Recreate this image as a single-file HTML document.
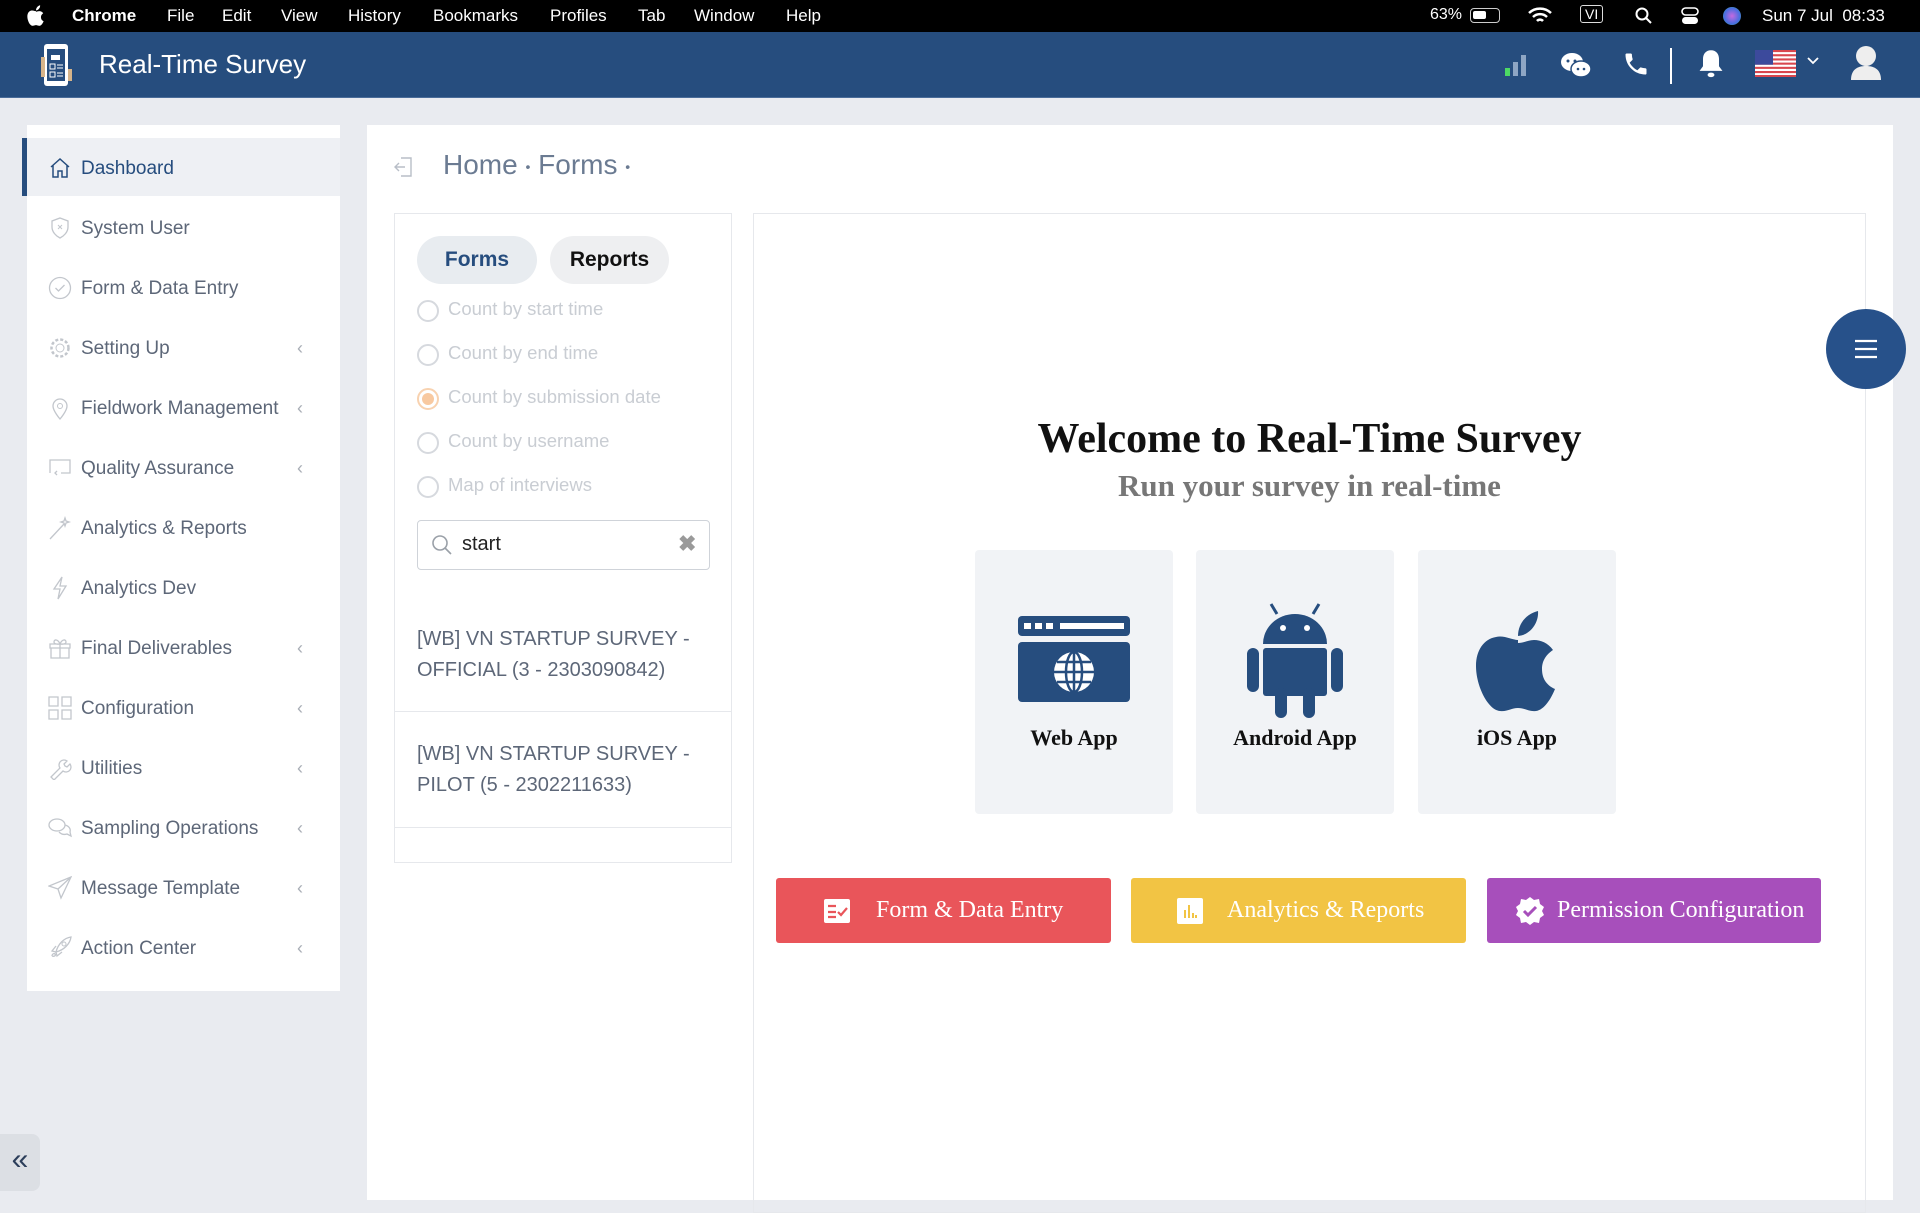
<!DOCTYPE html>
<html><head><meta charset="utf-8"><style>
*{box-sizing:border-box;margin:0;padding:0}
body{width:1920px;height:1200px;overflow:hidden;background:#e9ebf0;font-family:"Liberation Sans",sans-serif;position:relative}
.abs{position:absolute}
.mb{left:0;top:0;width:1920px;height:32px;background:#000;color:#fff;font-size:17px}
.mb span{position:absolute;top:6px}
.hd{left:0;top:32px;width:1920px;height:66px;background:#264d7e;border-bottom:1px solid #4a6c99}
.side{left:27px;top:125px;width:313px;height:866px;background:#fff}
.it{position:absolute;left:0;width:313px;height:58px;color:#5d6778;font-size:19px}
.it .t{position:absolute;left:54px;top:20px}
.it svg{position:absolute;left:21px;top:18px}
.it .ch{position:absolute;left:270px;top:20px;color:#a9aeb6;font-size:18px}
.main{left:367px;top:125px;width:1526px;height:1075px;background:#fff}
.radio{position:absolute;left:35px;width:22px;height:22px;border:2px solid #d6d9de;border-radius:50%}
.rt{position:absolute;left:53px;color:#c9cdd3;font-size:18.5px}
.btn{position:absolute;top:878px;height:65px;border-radius:3px;color:#fff;font-family:"Liberation Serif",serif;font-size:24px;line-height:65px}
.card{position:absolute;top:550px;width:198px;height:264px;background:#f1f3f6;border-radius:4px}
.card .l{position:absolute;top:175px;width:100%;text-align:center;font-family:"Liberation Serif",serif;font-weight:bold;font-size:22px;color:#111}
</style></head><body>
<div class="abs mb">
<svg class="abs" style="left:27px;top:5px" width="18" height="21" viewBox="0 0 84 102"><path d="M42 30c-6 0-14-5-22-3C8 29 0 40 0 56c0 20 12 44 24 45 7 1 11-3 18-3s11 4 18 3c8-1 15-12 19-22-9-4-13-11-13-20s5-15 11-19c-5-7-12-10-19-10-6 0-10 3-16 3z" fill="#fff"/><path d="M42 26c0-12 8-22 20-25 1 12-8 24-20 25z" fill="#fff"/></svg>
<span style="left:72px;font-weight:bold">Chrome</span><span style="left:167px">File</span><span style="left:222px">Edit</span><span style="left:281px">View</span><span style="left:348px">History</span><span style="left:433px">Bookmarks</span><span style="left:550px">Profiles</span><span style="left:638px">Tab</span><span style="left:694px">Window</span><span style="left:786px">Help</span>
<span style="left:1430px;font-size:16px">63%</span>
<span style="left:1470px;top:8px;width:30px;height:15px;border:1.5px solid #ccc;border-radius:4px"><i style="position:absolute;left:2px;top:2px;width:13px;height:8px;background:#fff;border-radius:2px"></i></span>
<svg class="abs" style="left:1527px;top:7px" width="26" height="18" viewBox="0 0 26 18"><path d="M2 6a16 16 0 0 1 22 0M6 10a10 10 0 0 1 14 0M10 14a4 4 0 0 1 6 0" stroke="#fff" stroke-width="2.5" fill="none"/></svg>
<span style="left:1580px;top:5px;border:1.5px solid #ddd;border-radius:3px;padding:0 4px;font-size:14px">VI</span>
<svg class="abs" style="left:1635px;top:7px" width="18" height="18"><circle cx="7" cy="7" r="5.5" stroke="#fff" stroke-width="2" fill="none"/><path d="M11 11l5 5" stroke="#fff" stroke-width="2"/></svg>
<svg class="abs" style="left:1680px;top:6px" width="20" height="20"><rect x="2" y="2" width="16" height="7" rx="3.5" fill="none" stroke="#fff" stroke-width="1.6"/><rect x="2" y="11" width="16" height="7" rx="3.5" fill="#fff"/></svg>
<span style="left:1723px;top:7px;width:18px;height:18px;border-radius:50%;background:radial-gradient(circle,#c56ae0,#4a6de0 60%,#3b8 100%)"></span>
<span style="left:1762px">Sun 7 Jul&nbsp;&nbsp;08:33</span>
</div>
<div class="abs hd">
<svg class="abs" style="left:40px;top:11px" width="34" height="44" viewBox="0 0 34 44"><rect x="4" y="1" width="24" height="42" rx="3" fill="#fff"/><rect x="7" y="6" width="18" height="32" fill="#264d7e"/><rect x="1" y="14" width="4" height="20" fill="#d6b48a"/><path d="M11 12h9v5h-9z" fill="#fff"/><rect x="10" y="21" width="5" height="5" fill="none" stroke="#fff"/><path d="M17 22h6M17 25h6M17 30h6M17 33h6" stroke="#fff"/><rect x="10" y="29" width="5" height="5" fill="none" stroke="#fff"/><rect x="28" y="26" width="4" height="12" fill="#d6b48a"/></svg>
<div class="abs" style="left:99px;top:17px;color:#fff;font-size:26px">Real-Time Survey</div>
<svg class="abs" style="left:1503px;top:20px" width="26" height="26"><rect x="2" y="16" width="5" height="8" fill="#4cd964"/><rect x="10" y="10" width="5" height="14" fill="#8ea6c4"/><rect x="18" y="3" width="5" height="21" fill="#8ea6c4"/></svg>
<svg class="abs" style="left:1560px;top:18px" width="32" height="30"><ellipse cx="12" cy="12" rx="11" ry="9" fill="#fff"/><ellipse cx="21" cy="19" rx="10" ry="8" fill="#fff" stroke="#264d7e" stroke-width="1.5"/><circle cx="8" cy="11" r="1.5" fill="#264d7e"/><circle cx="15" cy="11" r="1.5" fill="#264d7e"/><circle cx="18" cy="19" r="1.3" fill="#264d7e"/><circle cx="24" cy="19" r="1.3" fill="#264d7e"/></svg>
<svg class="abs" style="left:1622px;top:18px" width="28" height="28" viewBox="0 0 24 24"><path d="M6.6 10.8c1.4 2.8 3.8 5.1 6.6 6.6l2.2-2.2c.3-.3.7-.4 1-.2 1.1.4 2.3.6 3.6.6.6 0 1 .4 1 1V20c0 .6-.4 1-1 1C10.6 21 3 13.4 3 4c0-.6.4-1 1-1h3.5c.6 0 1 .4 1 1 0 1.3.2 2.5.6 3.6.1.3 0 .7-.2 1z" fill="#fff"/></svg>
<div class="abs" style="left:1670px;top:16px;width:2px;height:36px;background:#fff"></div>
<svg class="abs" style="left:1697px;top:16px" width="28" height="32" viewBox="0 0 24 28"><path d="M12 2c-4.5 0-7 3.3-7 7.5V16l-3 4h20l-3-4V9.5C19 5.3 16.5 2 12 2z" fill="#fff"/><ellipse cx="12" cy="23.5" rx="3" ry="2" fill="#fff"/></svg>
<svg class="abs" style="left:1755px;top:18px" width="41" height="27"><rect width="41" height="27" fill="#fff"/><g fill="#d9474f"><rect y="0" width="41" height="2.1"/><rect y="4.2" width="41" height="2.1"/><rect y="8.4" width="41" height="2.1"/><rect y="12.6" width="41" height="2.1"/><rect y="16.8" width="41" height="2.1"/><rect y="21" width="41" height="2.1"/><rect y="25" width="41" height="2"/></g><rect width="18" height="14.7" fill="#3c4a9c"/></svg>
<svg class="abs" style="left:1806px;top:24px" width="14" height="10"><path d="M2 2l5 5 5-5" stroke="#fff" stroke-width="1.8" fill="none"/></svg>
<svg class="abs" style="left:1849px;top:12px" width="34" height="38"><circle cx="17" cy="12" r="10" fill="#eee"/><path d="M2 36c0-10 6-14 15-14s15 4 15 14z" fill="#eee"/></svg>
</div>

<div class="abs side">
<div class="it" style="top:13px;background:#eef0f4;border-left:5px solid #264d7e;left:-5px;width:318px">
<svg style="left:21px" width="24" height="24" viewBox="0 0 24 24"><path d="M3 11L12 3l9 8M5 9v12h5v-6h4v6h5V9" stroke="#264d7e" stroke-width="1.5" fill="none"/></svg><span class="t" style="left:54px;color:#264d7e">Dashboard</span></div>
<div class="it" style="top:73px"><svg width="24" height="24" viewBox="0 0 24 24"><path d="M12 2l8 3v6c0 5-4 9-8 11-4-2-8-6-8-11V5z" stroke="#c2c6cc" stroke-width="1.3" fill="none"/><path d="M10 9l4 4M14 9l-4 4" stroke="#c2c6cc"/></svg><span class="t">System User</span></div>
<div class="it" style="top:133px"><svg width="24" height="24" viewBox="0 0 24 24"><circle cx="12" cy="12" r="10.5" stroke="#c2c6cc" stroke-width="1.3" fill="none"/><path d="M7.5 12l3 3 6-6" stroke="#c2c6cc" stroke-width="1.3" fill="none"/></svg><span class="t">Form &amp; Data Entry</span></div>
<div class="it" style="top:193px"><svg width="24" height="24" viewBox="0 0 24 24"><circle cx="12" cy="12" r="4" stroke="#c2c6cc" fill="none"/><circle cx="12" cy="12" r="8.5" stroke="#c2c6cc" stroke-dasharray="3 2" stroke-width="2.5" fill="none"/></svg><span class="t">Setting Up</span><span class="ch">&lsaquo;</span></div>
<div class="it" style="top:253px"><svg width="24" height="24" viewBox="0 0 24 24"><path d="M12 23s-7-8-7-13a7 7 0 0 1 14 0c0 5-7 13-7 13z" stroke="#c2c6cc" stroke-width="1.3" fill="none"/><circle cx="12" cy="10" r="2.5" stroke="#c2c6cc" fill="none"/></svg><span class="t">Fieldwork Management</span><span class="ch">&lsaquo;</span></div>
<div class="it" style="top:313px"><svg width="24" height="24" viewBox="0 0 24 24"><path d="M2 17V4h20v13h-9M9 15l-2 2 2 2" stroke="#c2c6cc" stroke-width="1.3" fill="none"/></svg><span class="t">Quality Assurance</span><span class="ch">&lsaquo;</span></div>
<div class="it" style="top:373px"><svg width="24" height="24" viewBox="0 0 24 24"><path d="M2 23L16 8M17 2l1 3 3 1-3 1-1 3-1-3-3-1 3-1z" stroke="#c2c6cc" stroke-width="1.3" fill="none"/></svg><span class="t">Analytics &amp; Reports</span></div>
<div class="it" style="top:433px"><svg width="24" height="24" viewBox="0 0 24 24"><path d="M14 1L6 13h6l-2 10 8-13h-6z" stroke="#c2c6cc" stroke-width="1.3" fill="none"/></svg><span class="t">Analytics Dev</span></div>
<div class="it" style="top:493px"><svg width="24" height="24" viewBox="0 0 24 24"><path d="M2 8h20v4H2zM3 12v10h18V12M12 8v14M12 8c-2-5-6-5-6-2s6 2 6 2c2-5 6-5 6-2s-6 2-6 2" stroke="#c2c6cc" stroke-width="1.3" fill="none"/></svg><span class="t">Final Deliverables</span><span class="ch">&lsaquo;</span></div>
<div class="it" style="top:553px"><svg width="24" height="24" viewBox="0 0 24 24"><path d="M1 1h9v9H1zM14 1h9v9h-9zM1 14h9v9H1zM14 14h9v9h-9z" stroke="#c2c6cc" stroke-width="1.3" fill="none"/></svg><span class="t">Configuration</span><span class="ch">&lsaquo;</span></div>
<div class="it" style="top:613px"><svg width="24" height="24" viewBox="0 0 24 24"><path d="M3 21l9-9a5 5 0 0 1 7-7l-3 3 1 2 2 1 3-3a5 5 0 0 1-7 7l-9 9z" stroke="#c2c6cc" stroke-width="1.3" fill="none"/></svg><span class="t">Utilities</span><span class="ch">&lsaquo;</span></div>
<div class="it" style="top:673px"><svg width="24" height="24" viewBox="0 0 24 24"><ellipse cx="9" cy="9" rx="8" ry="6" stroke="#c2c6cc" stroke-width="1.3" fill="none"/><path d="M17 9c4 1 6 4 5 7l1 4-4-2c-3 1-6 0-8-2" stroke="#c2c6cc" stroke-width="1.3" fill="none"/></svg><span class="t">Sampling Operations</span><span class="ch">&lsaquo;</span></div>
<div class="it" style="top:733px"><svg width="24" height="24" viewBox="0 0 24 24"><path d="M23 1L1 10l9 3 3 9z M10 13L23 1" stroke="#c2c6cc" stroke-width="1.3" fill="none"/></svg><span class="t">Message Template</span><span class="ch">&lsaquo;</span></div>
<div class="it" style="top:793px"><svg width="24" height="24" viewBox="0 0 24 24"><path d="M8 16c2-8 8-14 15-15-1 7-7 13-15 15zM8 16l-4-1 4-5M8 16l1 4 5-4M4 20c0-2 2-3 3-2s0 3-3 2" stroke="#c2c6cc" stroke-width="1.3" fill="none"/><circle cx="16" cy="8" r="2" stroke="#c2c6cc" fill="none"/></svg><span class="t">Action Center</span><span class="ch">&lsaquo;</span></div>
</div>

<div class="abs" style="left:0;top:1134px;width:40px;height:57px;background:#dcdfe4;border-radius:0 8px 8px 0;color:#2c3e5a;font-size:30px;line-height:52px;text-align:center">&laquo;</div>

<div class="abs main">
<svg class="abs" style="left:26px;top:30px" width="22" height="24" viewBox="0 0 22 24"><path d="M8 3h10v18H8M12 12H2M6 8l-4 4 4 4" stroke="#b8bec7" stroke-width="1.4" fill="none"/></svg>
<div class="abs" style="left:76px;top:24px;font-size:28px;color:#6b7b92">Home <span style="font-size:14px;vertical-align:middle">•</span> Forms <span style="font-size:14px;vertical-align:middle">•</span></div>

<div class="abs" style="left:27px;top:88px;width:338px;height:650px;border:1px solid #e6e8ec">
<div class="abs" style="left:22px;top:22px;width:120px;height:48px;border-radius:24px;background:#e8ecf0;color:#264d7e;font-weight:bold;font-size:21px;text-align:center;line-height:48px">Forms</div>
<div class="abs" style="left:155px;top:22px;width:119px;height:48px;border-radius:24px;background:#eeeff1;color:#111;font-weight:bold;font-size:21px;text-align:center;line-height:48px">Reports</div>
<div class="radio" style="left:22px;top:86px"></div><div class="rt" style="top:84px">Count by start time</div>
<div class="radio" style="left:22px;top:130px"></div><div class="rt" style="top:128px">Count by end time</div>
<div class="radio" style="left:22px;top:174px;border-color:#f8d2b0"><i style="position:absolute;left:3px;top:3px;width:12px;height:12px;border-radius:50%;background:#f8c9a0"></i></div><div class="rt" style="top:172px">Count by submission date</div>
<div class="radio" style="left:22px;top:218px"></div><div class="rt" style="top:216px">Count by username</div>
<div class="radio" style="left:22px;top:262px"></div><div class="rt" style="top:260px">Map of interviews</div>
<div class="abs" style="left:22px;top:306px;width:293px;height:50px;border:1px solid #cfd3d9;border-radius:4px">
<svg class="abs" style="left:12px;top:12px" width="24" height="24"><circle cx="10" cy="10" r="7" stroke="#9aa0a8" stroke-width="1.6" fill="none"/><path d="M15 15l6 6" stroke="#9aa0a8" stroke-width="1.6"/></svg>
<span class="abs" style="left:44px;top:12px;font-size:20px;color:#222">start</span>
<span class="abs" style="left:260px;top:10px;font-size:22px;color:#9a9a9a;font-weight:bold">✖</span></div>
<div class="abs" style="left:22px;top:410px;font-size:20px;color:#5d6778;line-height:31px">[WB] VN STARTUP SURVEY -<br>OFFICIAL (3 - 2303090842)</div>
<div class="abs" style="left:0;top:497px;width:336px;height:1px;background:#e6e8ec"></div>
<div class="abs" style="left:22px;top:525px;font-size:20px;color:#5d6778;line-height:31px">[WB] VN STARTUP SURVEY -<br>PILOT (5 - 2302211633)</div>
<div class="abs" style="left:0;top:613px;width:336px;height:1px;background:#e6e8ec"></div>
</div>

<div class="abs" style="left:386px;top:88px;width:1113px;height:1000px;border:1px solid #e6e8ec"></div>
<div class="abs" style="left:386px;top:290px;width:1113px;text-align:center;font-family:'Liberation Serif',serif;font-weight:bold;font-size:42px;color:#111">Welcome to Real-Time Survey</div>
<div class="abs" style="left:386px;top:343px;width:1113px;text-align:center;font-family:'Liberation Serif',serif;font-weight:bold;font-size:31px;color:#777">Run your survey in real-time</div>
</div>

<div class="card" style="left:975px"><svg class="abs" style="left:43px;top:66px" width="112" height="86" viewBox="0 0 112 86"><rect x="0" y="0" width="112" height="20" rx="4" fill="#264d7e"/><rect x="6" y="7" width="7" height="6" fill="#fff"/><rect x="17" y="7" width="7" height="6" fill="#fff"/><rect x="28" y="7" width="7" height="6" fill="#fff"/><rect x="42" y="7" width="64" height="6" fill="#fff"/><rect x="0" y="26" width="112" height="60" rx="4" fill="#264d7e"/><circle cx="56" cy="56" r="20" fill="#fff"/><g stroke="#264d7e" stroke-width="2.5" fill="none"><ellipse cx="56" cy="56" rx="8" ry="20"/><path d="M56 36v40M36 56h40M39 46h34M39 66h34"/></g></svg><div class="l">Web App</div></div>
<div class="card" style="left:1196px"><svg class="abs" style="left:51px;top:52px" width="96" height="116" viewBox="0 0 96 116"><path d="M24 2l6 10M72 2l-6 10" stroke="#264d7e" stroke-width="3"/><path d="M16 42a32 30 0 0 1 64 0z" fill="#264d7e"/><circle cx="36" cy="26" r="3" fill="#fff"/><circle cx="60" cy="26" r="3" fill="#fff"/><rect x="16" y="46" width="64" height="48" rx="3" fill="#264d7e"/><rect x="0" y="46" width="12" height="44" rx="6" fill="#264d7e"/><rect x="84" y="46" width="12" height="44" rx="6" fill="#264d7e"/><rect x="28" y="86" width="12" height="30" rx="6" fill="#264d7e"/><rect x="56" y="86" width="12" height="30" rx="6" fill="#264d7e"/></svg><div class="l">Android App</div></div>
<div class="card" style="left:1418px"><svg class="abs" style="left:58px;top:60px" width="84" height="102" viewBox="0 0 84 102"><path d="M42 30c-6 0-14-5-22-3C8 29 0 40 0 56c0 20 12 44 24 45 7 1 11-3 18-3s11 4 18 3c8-1 15-12 19-22-9-4-13-11-13-20s5-15 11-19c-5-7-12-10-19-10-6 0-10 3-16 3z" fill="#264d7e"/><path d="M42 26c0-12 8-22 20-25 1 12-8 24-20 25z" fill="#264d7e"/></svg><div class="l">iOS App</div></div>

<div class="btn" style="left:776px;width:335px;background:#e9555a"><svg class="abs" style="left:48px;top:21px" width="26" height="24"><rect width="26" height="24" rx="2" fill="#fff"/><path d="M4 7h8M4 13h8M4 18h8" stroke="#e9555a" stroke-width="2.2"/><path d="M14 13l3 3 6-7" stroke="#e9555a" stroke-width="2.2" fill="none"/></svg><span class="abs" style="left:100px">Form &amp; Data Entry</span></div>
<div class="btn" style="left:1131px;width:335px;background:#f2c444"><svg class="abs" style="left:46px;top:20px" width="26" height="26"><rect width="26" height="26" rx="2" fill="#fff"/><path d="M8 20V12M12 20V7M16 20v-5M19 20v-3" stroke="#f2c444" stroke-width="2"/></svg><span class="abs" style="left:96px">Analytics &amp; Reports</span></div>
<div class="btn" style="left:1487px;width:334px;background:#a74fbb"><svg class="abs" style="left:28px;top:18px" width="30" height="30" viewBox="0 0 30 30"><path d="M15 1l4 3 5-1 1 5 4 3-2 4 2 4-4 3-1 5-5-1-4 3-4-3-5 1-1-5-4-3 2-4-2-4 4-3 1-5 5 1z" fill="#fff"/><path d="M9 15l4 4 8-8" stroke="#a74fbb" stroke-width="3" fill="none"/></svg><span class="abs" style="left:70px">Permission Configuration</span></div>

<div class="abs" style="left:1826px;top:309px;width:80px;height:80px;border-radius:50%;background:#27518a"><svg class="abs" style="left:28px;top:29px" width="24" height="22"><path d="M1 3h22M1 11h22M1 19h22" stroke="#fff" stroke-width="2.2"/></svg></div>
</body></html>
